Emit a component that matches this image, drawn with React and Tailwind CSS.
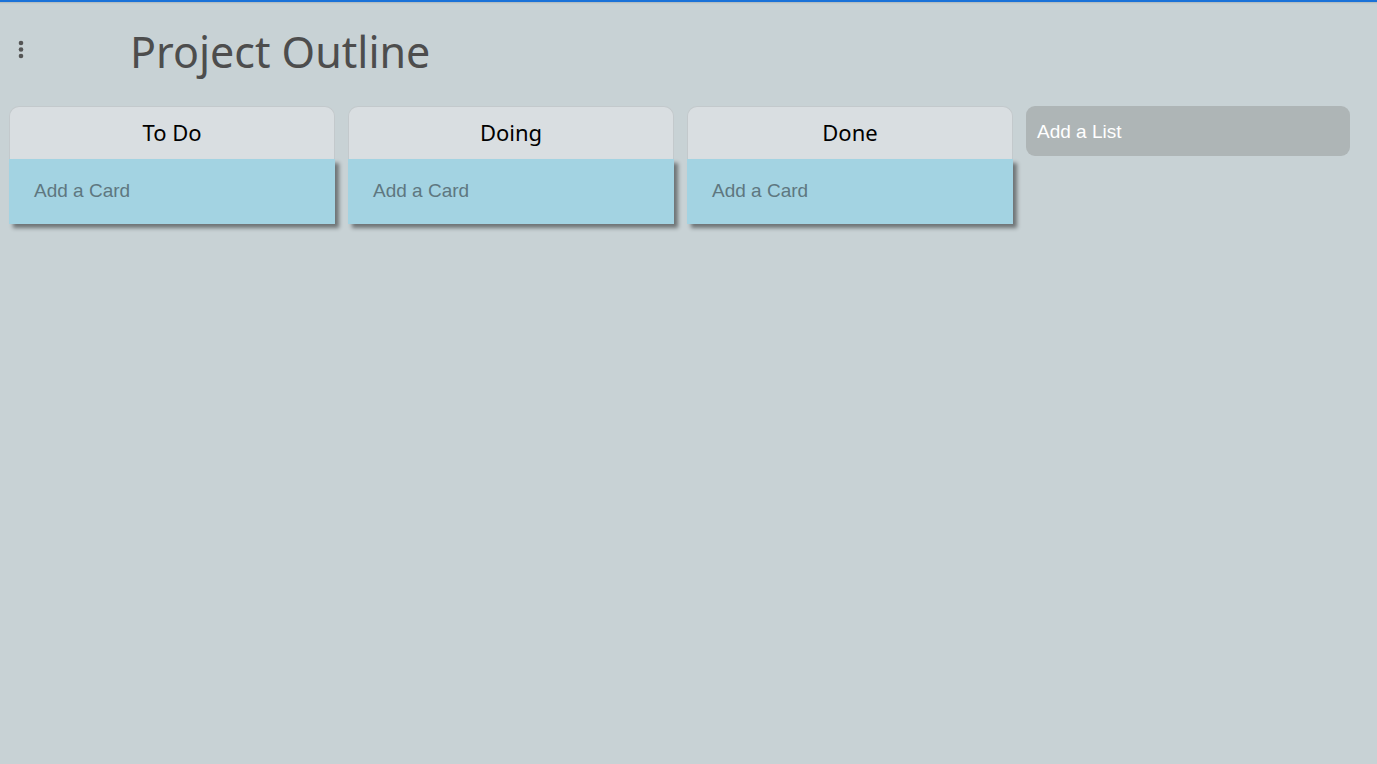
import React from "react";

const lists = ["To Do", "Doing", "Done"];

const List = ({ title }) => (
  <div className="w-[326px] shrink-0">
    <div className="h-[53px] flex items-center justify-center pb-[1px] bg-[#d9dee1] border border-b-0 border-[#c3c9cc] rounded-t-[10px] text-[22px] text-black font-['Noto_Sans',sans-serif]">
      {title}
    </div>
    <div className="h-[65px] flex items-center pl-[25px] bg-[#a3d3e2] shadow-[4px_4px_4px_rgba(0,0,0,0.45)] text-[19px] text-[#5e7780] font-['Liberation_Sans',sans-serif]">
      Add a Card
    </div>
  </div>
);

export default function App() {
  return (
    <div className="min-h-screen w-full bg-[#c8d2d5] border-t-2 border-[#1b72d8]">
      <div className="h-[2px] bg-gradient-to-b from-[rgba(0,0,0,0.12)] to-transparent" />
      <div className="flex items-center h-[102px] pb-[6px]">
        <div className="w-[130px] pl-[18px] flex -mt-[5px]">
          <svg width="6" height="20" viewBox="0 0 6 20" className="fill-[#555]">
            <circle cx="3" cy="3" r="2.3" />
            <circle cx="3" cy="9.5" r="2.3" />
            <circle cx="3" cy="16" r="2.3" />
          </svg>
        </div>
        <h1 className="text-[43px] text-[#4d4d4d] font-['Noto_Sans',sans-serif] leading-none -mt-[2px]">
          Project Outline
        </h1>
      </div>
      <div className="flex items-start gap-[13px] pl-[9px]">
        {lists.map((t) => (
          <List key={t} title={t} />
        ))}
        <div className="w-[324px] h-[50px] flex items-center pl-[11px] pt-[2px] bg-[#aeb5b6] rounded-[9px] text-[19px] text-white font-['Liberation_Sans',sans-serif]">
          Add a List
        </div>
      </div>
    </div>
  );
}
